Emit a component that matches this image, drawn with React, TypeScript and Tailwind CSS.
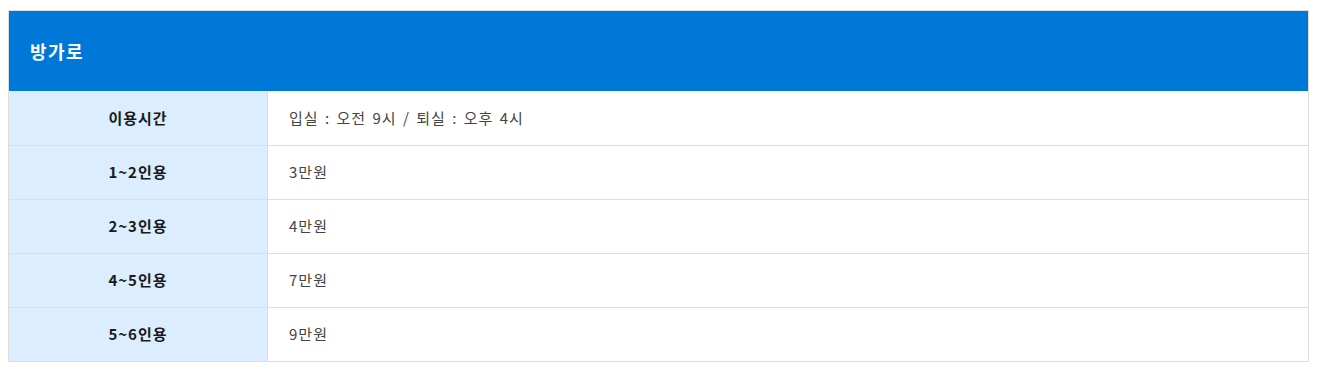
const rows: [string, string][] = [
  ['이용시간', '입실 : 오전 9시 / 퇴실 : 오후 4시'],
  ['1~2인용', '3만원'],
  ['2~3인용', '4만원'],
  ['4~5인용', '7만원'],
  ['5~6인용', '9만원'],
]

export default function App() {
  return (
    <div className="bg-white pl-2 pt-[10px] font-['Noto_Sans_CJK_KR','Noto_Sans',sans-serif]">
      <div className="w-[1301px] border border-[#dddddd]">
        <div className="h-[80px] bg-[#0078d7] flex items-center px-[21px]">
          <h3 className="text-[18px] tracking-[1.5px] font-bold text-white">방가로</h3>
        </div>
        {rows.map(([label, value], i) => (
          <div key={label} className={`flex h-[54px] ${i > 0 ? 'border-t border-[#dddddd]' : ''}`}>
            <div className="w-[259px] shrink-0 bg-[#dbedfe] border-r border-[#dddddd] flex items-center justify-center text-[15px] tracking-[1px] font-bold text-[#1a1a1a]">
              {label}
            </div>
            <div className="flex-1 flex items-center px-[21px] text-[15px] tracking-[1px] [word-spacing:2px] text-[#444444]">
              {value}
            </div>
          </div>
        ))}
      </div>
    </div>
  )
}
